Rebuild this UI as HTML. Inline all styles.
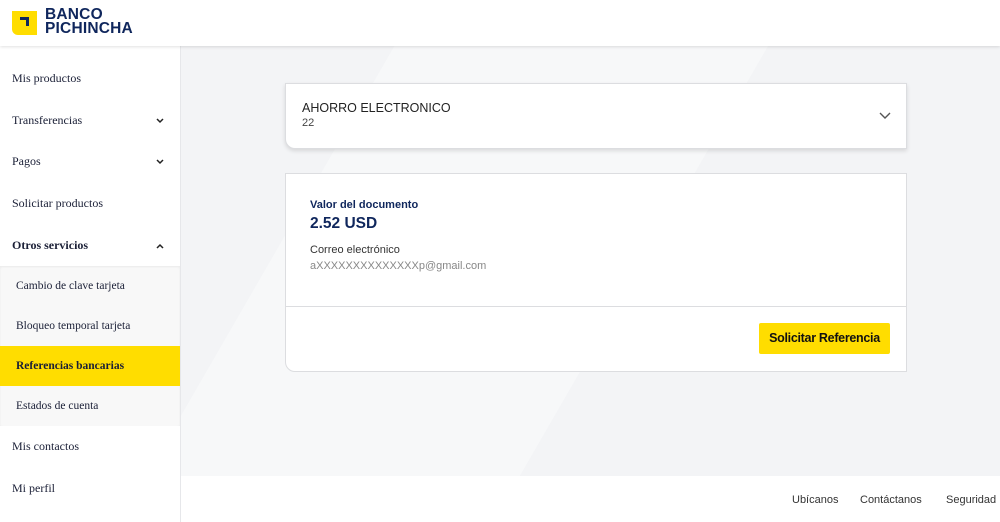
<!DOCTYPE html><html><head><style>
body{margin:0;width:1000px;height:522px;overflow:hidden;font-family:"Liberation Sans",sans-serif;background:#f3f4f6;position:relative}
.hdr{position:absolute;left:0;top:0;width:1000px;height:46px;background:#fff;box-shadow:0 1px 3px rgba(0,0,0,.12);z-index:3}
.logo{position:absolute;left:12px;top:11px;width:25px;height:24px;background:#ffdd00;border-radius:0 0 0 6px}
.logo i{position:absolute;left:8px;top:6px;width:9px;height:3px;background:#0f265c}
.logo b{position:absolute;left:14px;top:6px;width:3px;height:9px;background:#0f265c}
.lt{position:absolute;left:45px;top:8px;font-weight:bold;color:#0f265c;font-size:15.5px;line-height:14px;letter-spacing:.2px}
.side{position:absolute;left:0;top:46px;width:180px;height:476px;background:#fff;border-right:1px solid #e6e7ea;z-index:2}
.it{height:41.7px;line-height:41.7px;padding-left:12px;font-family:"Liberation Serif",serif;font-size:12px;color:#1a1f36;position:relative}
.it svg{position:absolute;right:16px;top:18px}
.sub{background:#f8f8f8;box-shadow:inset 0 1px 2px rgba(0,0,0,.06)}
.sub .it{padding-left:16px;height:40px;line-height:40px;font-size:11.5px}
.sel{background:#ffdd00}
.bg{position:absolute;left:181px;top:46px;width:819px;height:430px;background:linear-gradient(120deg,#f3f4f6 0,#f3f4f6 20%,#f7f8f9 20%,#f7f8f9 55%,#f3f4f6 55%)}
.card{position:absolute;background:#fff;border:1px solid #dcdde0;border-radius:0 0 0 10px}
.foot{position:absolute;left:181px;top:476px;width:819px;height:46px;background:#fff;font-size:11px;color:#333}
.foot span{position:absolute;top:18px}
</style></head><body>
<div class="hdr"><div class="logo"><i></i><b></b></div><div class="lt">BANCO<br>PICHINCHA</div></div>
<div class="side">
<div class="it" style="margin-top:12px">Mis productos</div>
<div class="it">Transferencias<svg width="8" height="6"><path d="M1 1l3 3 3-3" stroke="#222" stroke-width="1.5" fill="none"/></svg></div>
<div class="it">Pagos<svg width="8" height="6"><path d="M1 1l3 3 3-3" stroke="#222" stroke-width="1.5" fill="none"/></svg></div>
<div class="it">Solicitar productos</div>
<div class="it" style="font-weight:bold">Otros servicios<svg width="8" height="6"><path d="M1 5l3-3 3 3" stroke="#222" stroke-width="1.5" fill="none"/></svg></div>
<div class="sub">
<div class="it">Cambio de clave tarjeta</div>
<div class="it">Bloqueo temporal tarjeta</div>
<div class="it sel" style="font-weight:bold">Referencias bancarias</div>
<div class="it">Estados de cuenta</div>
</div>
<div class="it">Mis contactos</div>
<div class="it">Mi perfil</div>
</div>
<div class="bg"></div>
<div class="card" style="left:285px;top:83px;width:620px;height:64px;box-shadow:0 2px 4px rgba(0,0,0,.12)">
<div style="position:absolute;left:16px;top:17px;font-size:12.5px;color:#222">AHORRO ELECTRONICO</div>
<div style="position:absolute;left:16px;top:33px;font-size:11px;color:#444">22</div>
<svg style="position:absolute;right:15px;top:28px" width="12" height="8"><path d="M1 1l5 5 5-5" stroke="#555" stroke-width="1.4" fill="none"/></svg>
</div>
<div class="card" style="left:285px;top:173px;width:620px;height:197px">
<div style="position:absolute;left:24px;top:25px;font-size:11px;color:#0f265c;font-weight:bold">Valor del documento</div>
<div style="position:absolute;left:24px;top:41px;font-size:15.5px;color:#0f265c;font-weight:bold">2.52 USD</div>
<div style="position:absolute;left:24px;top:70px;font-size:11px;color:#333">Correo electrónico</div>
<div style="position:absolute;left:24px;top:86px;font-size:11px;color:#888">aXXXXXXXXXXXXXXp@gmail.com</div>
<div style="position:absolute;left:0;top:132px;width:620px;border-top:1px solid #dcdde0"></div>
<div style="position:absolute;left:473px;top:149px;width:131px;height:31px;background:#ffdd00;border-radius:2px;font-size:12.5px;line-height:31px;text-align:center;color:#111;font-weight:bold;letter-spacing:-.3px">Solicitar Referencia</div>
</div>
<div class="foot"><span style="left:611px">Ubícanos</span><span style="left:679px">Contáctanos</span><span style="left:765px">Seguridad</span></div>
</body></html>
